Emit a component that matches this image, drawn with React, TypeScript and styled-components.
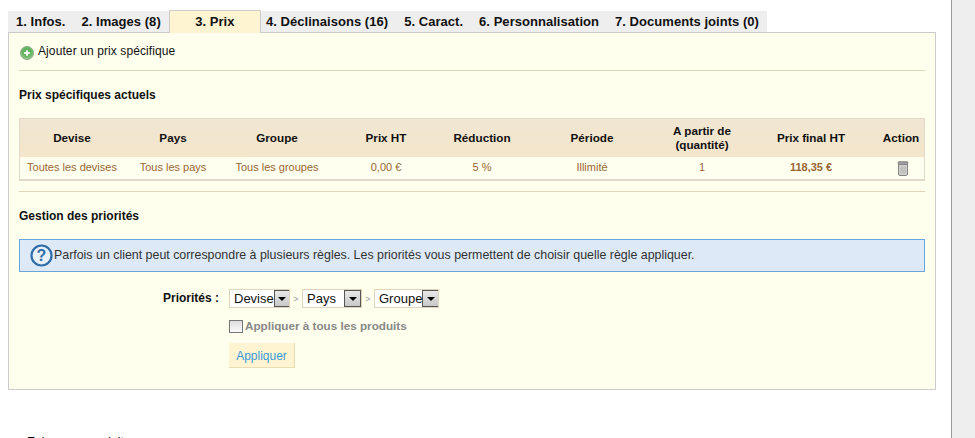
import styled, { createGlobalStyle } from "styled-components";

const GlobalStyle = createGlobalStyle`
	html, body {
		margin: 0;
		padding: 0;
		height: 438px;
		overflow: hidden;
		background: #fff;
		font-family: "Liberation Sans", Arial, sans-serif;
		font-size: 12px;
		color: #000;
	}
`;

const Page = styled.div`
	display: flex;
	height: 438px;
	overflow: hidden;
`;
const Main = styled.main`
	width: 951px;
	padding: 11px 15px 0 8px;
	box-sizing: border-box;
`;
const SideStrip = styled.aside`
	flex: 1;
	background: #eee;
	border-left: 1px solid #999;
`;

const TabBar = styled.ul`
	display: flex;
	width: 759px;
	height: 21px;
	margin: 0;
	padding: 0;
	list-style: none;
	background: #eee;
	position: relative;
	z-index: 1;
`;
const Tab = styled.li<{ $active?: boolean; $tight?: boolean }>`
	height: ${({ $active }) => ($active ? "23px" : "21px")};
	padding: ${({ $active, $tight }) => ($active ? "0" : $tight ? "0 8px 0 5px" : "0 8px")};
	width: ${({ $active }) => ($active ? "93px" : "auto")};
	margin-top: ${({ $active }) => ($active ? "-1px" : "0")};
	box-sizing: border-box;
	line-height: 21px;
	font-weight: bold;
	font-size: 13px;
	letter-spacing: 0.04px;
	color: #111;
	text-align: center;
	white-space: nowrap;
	background: ${({ $active }) => ($active ? "#fff4d2" : "#eee")};
	border: ${({ $active }) => ($active ? "1px solid #ccc" : "0")};
	border-bottom: 0;
`;

const Panel = styled.section`
	height: 358px;
	box-sizing: border-box;
	padding: 0 10px;
	background: #ffffee;
	border: 1px solid #ccc;
`;

const AddLink = styled.a`
	display: flex;
	align-items: center;
	gap: 4px;
	height: 37px;
	padding: 0 0 1px 1px;
	box-sizing: border-box;
	color: #111;
	font-size: 12px;
	letter-spacing: 0.1px;
	svg {
		margin-top: 3px;
	}
`;
const Divider = styled.hr`
	height: 1px;
	margin: 0;
	border: 0;
	background: #e0d5bb;
`;
const SectionTitle = styled.h4`
	margin: 0;
	height: 47px;
	line-height: 49px;
	font-size: 12px;
	font-weight: bold;
	color: #111;
`;

const PriceTable = styled.table`
	width: 906px;
	table-layout: fixed;
	border-collapse: separate;
	border-spacing: 0;
	border: 1px solid #dfdacb;
	border-bottom-width: 2px;
	margin-bottom: 10px;
`;
const HeadCell = styled.th`
	height: 38px;
	padding: 0;
	font-size: 11.7px;
	font-weight: bold;
	line-height: 14px;
	color: #111;
	background: linear-gradient(#f0e6d2, #f5e6cb);
`;
const Cell = styled.td<{ $strong?: boolean }>`
	height: 22px;
	padding: 0 0 2px;
	box-sizing: border-box;
	text-align: center;
	font-size: 11px;
	font-weight: ${({ $strong }) => ($strong ? "bold" : "normal")};
	color: #996633;
	background: #fffff0;
`;
const ActionCell = styled(Cell)`
	padding: 0 0 0 4px;
`;

const InfoBox = styled.div`
	display: flex;
	align-items: center;
	gap: 1px;
	height: 33px;
	padding-left: 10px;
	box-sizing: border-box;
	background: #dde9f7;
	border: 1px solid #6aa5dc;
	color: #333;
	font-size: 12.4px;
`;
const InfoText = styled.span`
	padding-bottom: 2px;
`;

const FormRow = styled.div`
	display: flex;
	align-items: center;
`;
const PriorityRow = styled(FormRow)`
	margin-top: 17px;
	height: 19px;
`;
const FieldLabel = styled.label`
	width: 210px;
	padding: 0 10px 2px 0;
	box-sizing: border-box;
	text-align: right;
	font-weight: bold;
	font-size: 12px;
	color: #111;
`;
const SelectBox = styled.div<{ $width: number }>`
	display: flex;
	align-items: center;
	justify-content: space-between;
	width: ${({ $width }) => $width}px;
	height: 19px;
	box-sizing: border-box;
	padding-left: 4px;
	background: #fff;
	border: 1px solid #e0d5bb;
	font-size: 13px;
	color: #111;
	overflow: hidden;
`;
const SelectButton = styled.span`
	display: flex;
	align-items: center;
	justify-content: center;
	flex: none;
	width: 17px;
	height: 17px;
	box-sizing: border-box;
	background: linear-gradient(#e8e8e8, #c8c8c8);
	border: 1px solid #555;
	&::after {
		content: "";
		border: 4px solid transparent;
		border-top-color: #000;
		border-bottom-width: 0;
	}
`;
const Chevron = styled.span`
	width: 12px;
	text-align: center;
	font-size: 9px;
	color: #999;
`;
const CheckRow = styled(FormRow)`
	align-items: flex-start;
	margin: 12px 0 0 210px;
	height: 16px;
	gap: 2px;
	font-size: 11.7px;
	line-height: 11px;
	font-weight: bold;
	color: #888;
`;
const CheckBox = styled.span`
	width: 14px;
	height: 13px;
	box-sizing: border-box;
	background: linear-gradient(#ddd, #fbfbfb);
	border: 1px solid #777;
`;
const ApplyButton = styled.button`
	display: block;
	margin: 7px 0 0 210px;
	width: 66px;
	height: 25px;
	padding: 2px 0 0;
	background: #fff4d2;
	border: 0;
	border-right: 1px solid #e8dcb0;
	border-bottom: 1px solid #e8dcb0;
	color: #3a9ad9;
	font-family: inherit;
	font-size: 12px;
`;

const FooterLine = styled.p`
	margin: 45px 0 0 19px;
	font-size: 12px;
	color: #000;
`;

const columns = [104, 98, 110, 108, 84, 136, 84, 134, 46];

const PlusIcon = () => (
	<svg width="14" height="14" viewBox="0 0 15 15">
		<defs>
			<radialGradient id="plusFill" cx="50%" cy="40%" r="60%">
				<stop offset="0%" stopColor="#4fa94c" />
				<stop offset="70%" stopColor="#6fb96c" />
				<stop offset="100%" stopColor="#a9d4a6" />
			</radialGradient>
		</defs>
		<circle cx="7.5" cy="7.5" r="7" fill="url(#plusFill)" stroke="#86a884" />
		<path d="M7.5 4.5v6M4.5 7.5h6" stroke="#fff" strokeWidth="2" />
	</svg>
);

const TrashIcon = () => (
	<svg width="12" height="15" viewBox="0 0 12 15" style={{ verticalAlign: "middle" }}>
		<path d="M1.5 3h9v10a1.5 1.5 0 0 1-1.5 1.5H3A1.5 1.5 0 0 1 1.5 13z" fill="#d0d0cc" stroke="#858585" />
		<rect x="1" y="0.5" width="10" height="3" rx="1.4" fill="#9a9a9a" stroke="#777" strokeWidth=".6" />
		<path d="M4 5.5v7M6 5.5v7M8 5.5v7" stroke="#a8a8a8" strokeWidth=".7" />
	</svg>
);

const HelpIcon = () => (
	<svg width="23" height="23" viewBox="0 0 23 23">
		<circle cx="11.5" cy="11.5" r="10" fill="#e8f0fa" stroke="#2f6ea8" strokeWidth="2.2" />
		<text x="11.5" y="17" textAnchor="middle" fontSize="16" fontWeight="bold" fontFamily="Liberation Sans" fill="#2f6ea8">
			?
		</text>
	</svg>
);

const App = () => (
	<>
		<GlobalStyle />
		<Page>
			<Main>
				<TabBar>
					<Tab>1. Infos.</Tab>
					<Tab>2. Images (8)</Tab>
					<Tab $active>3. Prix</Tab>
					<Tab $tight>4. Déclinaisons (16)</Tab>
					<Tab>5. Caract.</Tab>
					<Tab>6. Personnalisation</Tab>
					<Tab>7. Documents joints (0)</Tab>
				</TabBar>
				<Panel>
					<AddLink>
						<PlusIcon />
						Ajouter un prix spécifique
					</AddLink>
					<Divider />
					<SectionTitle>Prix spécifiques actuels</SectionTitle>
					<PriceTable>
						<colgroup>
							{columns.map((w, i) => (
								<col key={i} style={{ width: w }} />
							))}
						</colgroup>
						<thead>
							<tr>
								<HeadCell>Devise</HeadCell>
								<HeadCell>Pays</HeadCell>
								<HeadCell>Groupe</HeadCell>
								<HeadCell>Prix HT</HeadCell>
								<HeadCell>Réduction</HeadCell>
								<HeadCell>Période</HeadCell>
								<HeadCell>
									A partir de
									<br />
									(quantité)
								</HeadCell>
								<HeadCell>Prix final HT</HeadCell>
								<HeadCell>Action</HeadCell>
							</tr>
						</thead>
						<tbody>
							<tr>
								<Cell>Toutes les devises</Cell>
								<Cell>Tous les pays</Cell>
								<Cell>Tous les groupes</Cell>
								<Cell>0,00 €</Cell>
								<Cell>5 %</Cell>
								<Cell>Illimité</Cell>
								<Cell>1</Cell>
								<Cell $strong>118,35 €</Cell>
								<ActionCell>
									<TrashIcon />
								</ActionCell>
							</tr>
						</tbody>
					</PriceTable>
					<Divider />
					<SectionTitle>Gestion des priorités</SectionTitle>
					<InfoBox>
						<HelpIcon />
						<InfoText>
							Parfois un client peut correspondre à plusieurs règles. Les priorités vous permettent de choisir quelle règle appliquer.
						</InfoText>
					</InfoBox>
					<PriorityRow>
						<FieldLabel>Priorités :</FieldLabel>
						<SelectBox $width={61}>
							Devise
							<SelectButton />
						</SelectBox>
						<Chevron>&gt;</Chevron>
						<SelectBox $width={60}>
							Pays
							<SelectButton />
						</SelectBox>
						<Chevron>&gt;</Chevron>
						<SelectBox $width={65}>
							Groupe
							<SelectButton />
						</SelectBox>
					</PriorityRow>
					<CheckRow>
						<CheckBox />
						Appliquer à tous les produits
					</CheckRow>
					<ApplyButton>Appliquer</ApplyButton>
				</Panel>
				<FooterLine>Enlever ce produit</FooterLine>
			</Main>
			<SideStrip />
		</Page>
	</>
);

export default App;
